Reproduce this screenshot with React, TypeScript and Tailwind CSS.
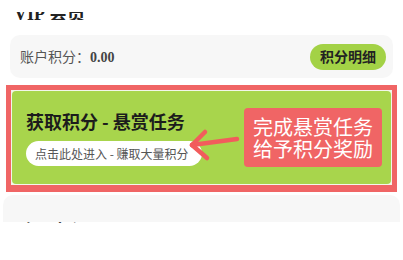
const cjk = { fontFamily: '"Noto Sans CJK SC", "Noto Sans", sans-serif' };
const serif = { fontFamily: '"Liberation Serif", "Noto Sans CJK SC", serif' };

function Arrow() {
  return (
    <svg
      className="pointer-events-none absolute left-[186px] top-[126px]"
      width="60"
      height="40"
      viewBox="0 0 60 40"
    >
      <g stroke="#f25c5c" strokeWidth="4.5" strokeLinecap="round" fill="none">
        <path d="M6 19 L51 13" />
        <path d="M6 19 L19 6" />
        <path d="M6 19 L21 32" />
      </g>
    </svg>
  );
}

export default function App() {
  return (
    <div className="relative h-[260px] w-[403px] overflow-hidden bg-white" style={cjk}>
      {/* page title, cut off at the top */}
      <div className="pt-[12px]">
        <div className="h-[8px] overflow-hidden pl-[14px]">
          <div className="-mt-[9px] text-[18px] font-bold leading-[18px] text-[#222]">
            <span style={serif}>VIP</span> 会员
          </div>
        </div>
      </div>

      {/* account points */}
      <div className="mx-[10px] mt-[15px] flex h-[43px] items-center justify-between rounded-[10px] bg-[#f7f7f7] pl-[10px] pr-[7px]">
        <div className="text-[14px] text-[#555]">
          账户积分：<span style={serif} className="font-bold text-[#444]">0.00</span>
        </div>
        <button className="flex h-[26px] w-[76px] items-center justify-center rounded-full bg-[#a3d246] text-[14px] font-bold text-[#222]">
          积分明细
        </button>
      </div>

      {/* bounty task banner */}
      <div className="mx-[6px] mt-[7px] border-[5px] border-b-[7px] border-[#f06565] bg-[#f3f6ea] p-px">
        <div className="flex h-[93px] items-center justify-between rounded-[4px] bg-[#a8d54c] pl-[14px] pr-[9px]">
          <div className="flex flex-col">
            <div className="text-[18px] font-bold leading-[24px] text-[#1c1c1c]">
              获取积分 - 悬赏任务
            </div>
            <div className="mt-[8px] flex h-[25px] w-[176px] items-center rounded-full bg-white pl-[9px] text-[12px] text-[#555]">
              点击此处进入 - 赚取大量积分
            </div>
          </div>
          <div className="flex h-[59px] w-[138px] flex-col items-center justify-center rounded-[4px] bg-[#f06565] text-[20px] leading-[22px] text-white">
            <div>完成悬赏任务</div>
            <div>给予积分奖励</div>
          </div>
        </div>
      </div>

      {/* next section, cut off */}
      <div className="mx-[3px] mt-[3px] h-[27px] rounded-t-[10px] bg-[#f7f7f7]" />
      <div className="-mt-[1px] h-[2px] overflow-hidden pl-[20px]">
        <div className="text-[16px] font-bold leading-[16px] text-[#444]">个人中心</div>
      </div>

      <Arrow />
    </div>
  );
}
